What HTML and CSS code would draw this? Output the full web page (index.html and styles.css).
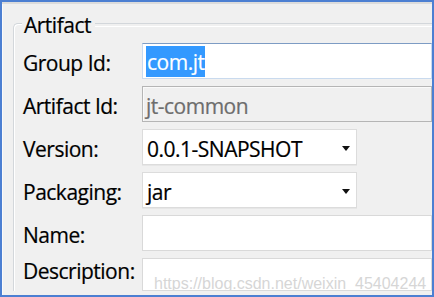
FILE: index.html
```html
<!DOCTYPE html>
<html>
<head>
<meta charset="utf-8">
<link rel="stylesheet" href="styles.css">
</head>
<body>
<div class="window">
  <section class="group">
    <div class="head"><span class="legend">Artifact</span></div>
    <div class="body">
      <div class="row">
        <span class="label">Group Id:</span>
        <div class="field focus"><span class="sel">com.jt</span></div>
      </div>
      <div class="row">
        <span class="label">Artifact Id:</span>
        <div class="field disabled">jt-common</div>
      </div>
      <div class="row">
        <span class="label">Version:</span>
        <div class="combo"><span>0.0.1-SNAPSHOT</span><span class="arrow"></span></div>
      </div>
      <div class="row">
        <span class="label">Packaging:</span>
        <div class="combo"><span>jar</span><span class="arrow"></span></div>
      </div>
      <div class="row">
        <span class="label">Name:</span>
        <div class="field plain"></div>
      </div>
      <div class="row last">
        <span class="label">Description:</span>
        <div class="field plain"><span class="watermark">https://blog.csdn.net/weixin_45404244</span></div>
      </div>
    </div>
  </section>
</div>
</body>
</html>
```

FILE: styles.css
```css
* { box-sizing: border-box; }
html, body { margin: 0; padding: 0; }
body { width: 434px; height: 297px; overflow: hidden; background: #f0f0f0; }

.window {
  width: 434px;
  height: 297px;
  border: 2px solid #4c7fd2;
  background: #f0f0f0;
  overflow: hidden;
  box-shadow: inset 0 2px 0 #dcdcdc, inset 1px 0 0 #fafafa;
  font-family: "Open Sans", "Noto Sans", sans-serif;
  font-size: 21px;
  letter-spacing: -0.5px;
  color: #000;
  -webkit-text-stroke: 0.2px currentColor;
}

.group {
  margin: 10px 0 0 11px;
}

.head {
  display: flex;
  align-items: center;
  height: 24px;
}
.head::before {
  content: "";
  align-self: flex-end;
  width: 8px;
  height: 12px;
  border-top: 1px solid #d3d7db;
  border-left: 1px solid #d3d7db;
  border-top-left-radius: 5px;
  box-shadow: inset 1px 1px 0 #fff;
}
.head::after {
  content: "";
  flex: 1;
  height: 2px;
  border-top: 1px solid #d3d7db;
  border-bottom: 1px solid #fff;
  margin-top: 1px;
}

.legend {
  padding: 0 4px 0 2px;
  line-height: 24px;
  padding-top: 1px;
}

.body {
  border-left: 1px solid #d3d7db;
  box-shadow: inset 1px 0 0 #fff;
  padding: 7px 0 0 9px;
}

.row {
  display: flex;
  align-items: center;
  height: 36px;
  margin-bottom: 7px;
}
.row.last { height: 33px; align-items: flex-start; }

.label {
  width: 119px;
  flex: none;
  line-height: 24px;
  padding-top: 3px;
  white-space: nowrap;
}

.field {
  flex: 1;
  min-width: 0;
  height: 36px;
  display: flex;
  align-items: center;
  padding: 3px 0 0 3px;
  border: 1px solid #d9d9d9;
  background: #fff;
  overflow: hidden;
}
.row.last .field { height: 33px; align-items: flex-start; }
.row.last .label { padding-top: 1px; }

.field.focus {
  border-color: #c9daee;
  border-top-color: #7d9cc4;
  padding-top: 1px;
}

.sel {
  background: #3399ff;
  color: #fff;
  line-height: 30px;
  padding: 1px 1px 0;
}

.field.disabled {
  background: #f0f0f0;
  border-color: #b5b5b5;
  box-shadow: inset 1px 1px 0 #fafafa;
  color: #6d6d6d;
}

.combo {
  width: 215px;
  height: 36px;
  flex: none;
  display: flex;
  align-items: center;
  justify-content: space-between;
  padding: 3px 6px 0 4px;
  background: #fff;
  border: 1px solid #dcdcdc;
  box-shadow: 0 1px 0 #e6e6e6;
}

.arrow {
  width: 0;
  height: 0;
  border-left: 4px solid transparent;
  border-right: 4px solid transparent;
  border-top: 5px solid #111;
  margin-top: -1px;
}

.watermark {
  font-family: "Liberation Sans", Arial, sans-serif;
  font-size: 16px;
  letter-spacing: 0;
  line-height: 18px;
  color: #d6d6d6;
  -webkit-text-stroke: 0;
  padding-left: 8px;
  margin-top: 13px;
  white-space: nowrap;
}
```
